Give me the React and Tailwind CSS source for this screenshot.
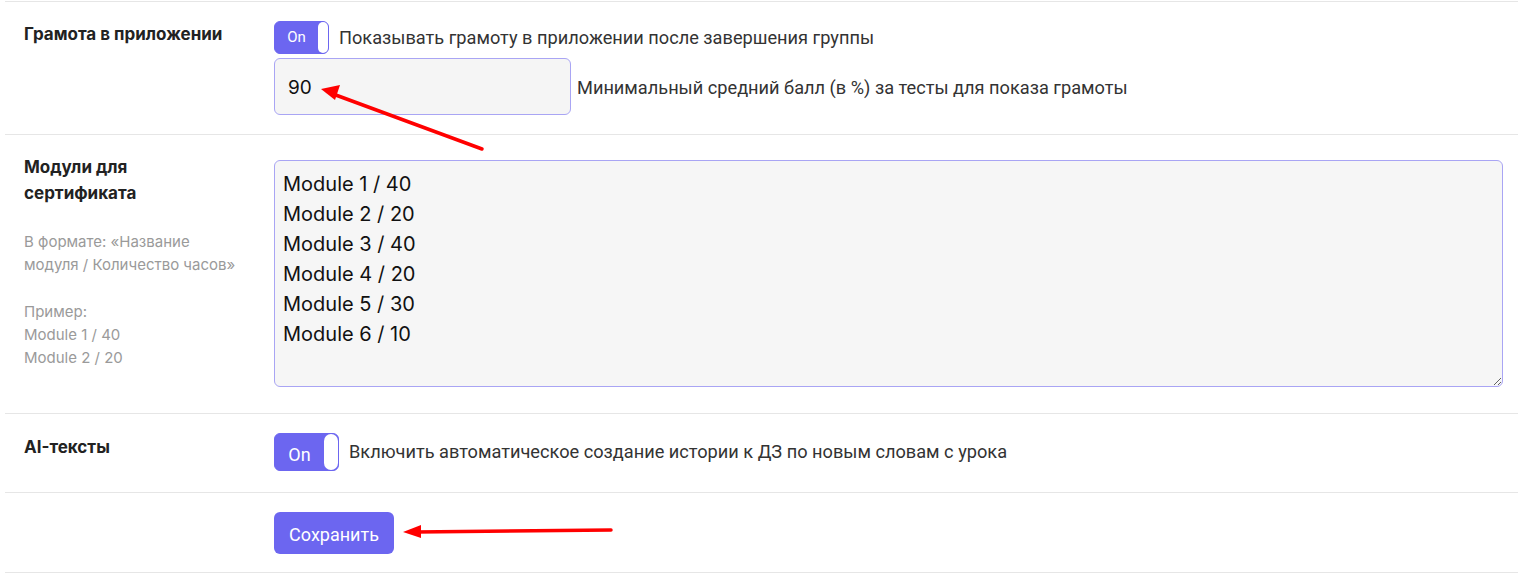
import React from "react";

function Toggle({ big }) {
  return (
    <div
      className={
        big
          ? "flex h-[38px] w-[65px] shrink-0 rounded-[6px] bg-[#6c66f0] border border-[#6c66f0]"
          : "flex h-[33px] w-[55px] shrink-0 rounded-[6px] bg-[#6c66f0] border border-[#6c66f0]"
      }
    >
      <div
        className={
          big
            ? "flex flex-1 items-center justify-center pt-[4px] text-[18px] text-white font-['Roboto',sans-serif]"
            : "flex flex-1 items-center justify-center text-[15px] text-white font-['Roboto',sans-serif]"
        }
      >
        On
      </div>
      <div className={big ? "w-[14px] rounded-[7px] bg-white" : "w-[10px] rounded-[6px] bg-white"} />
    </div>
  );
}

function Arrows() {
  return (
    <svg className="pointer-events-none absolute left-0 top-0" width="1518" height="584">
      <g stroke="#ff0000" strokeWidth="3.5" strokeLinecap="round" fill="#ff0000">
        <line x1="482" y1="149" x2="333" y2="94" />
        <polygon points="321,89 340,85 335,100" stroke="none" />
        <line x1="611" y1="530" x2="416" y2="532" />
        <polygon points="403,532 421,525 421,538" stroke="none" />
      </g>
    </svg>
  );
}

export default function App() {
  const modules = [
    "Module 1 / 40",
    "Module 2 / 20",
    "Module 3 / 40",
    "Module 4 / 20",
    "Module 5 / 30",
    "Module 6 / 10",
  ];

  return (
    <div className="relative h-[584px] w-[1518px] bg-white pt-px pl-[5px] font-['Inter',sans-serif] text-[#222]">
      {/* row 1 */}
      <div className="flex border-t border-[#e6e6e6] pt-[19px] pb-[19px]">
        <div className="w-[269px] shrink-0 pl-[19px] pt-[1px] text-[17px] font-bold leading-[24px] text-[#222]">
          Грамота в приложении
        </div>
        <div className="flex flex-col gap-[4px]">
          <div className="flex items-center gap-[10px]">
            <Toggle />
            <span className="font-['Roboto',sans-serif] text-[18.2px] text-[#333]">
              Показывать грамоту в приложении после завершения группы
            </span>
          </div>
          <div className="flex items-center gap-[6px]">
            <div className="flex h-[57px] w-[297px] items-center rounded-[6px] border border-[#a9a5f4] bg-[#f5f5f5] px-[13px] pt-[3px] text-[19px] text-[#111]">
              90
            </div>
            <span className="pt-[3px] font-['Roboto',sans-serif] text-[18.2px] text-[#333]">
              Минимальный средний балл (в %) за тесты для показа грамоты
            </span>
          </div>
        </div>
      </div>

      {/* row 2 */}
      <div className="flex border-t border-[#e6e6e6] pt-[25px] pb-[26px] pr-[15px]">
        <div className="w-[269px] shrink-0 pl-[19px] -mt-[6px]">
          <div className="text-[17px] font-bold leading-[26px] text-[#222]">
            Модули для
            <br />
            сертификата
          </div>
          <div className="mt-[24px] text-[15px] leading-[23px] text-[#9a9a9a]">
            В формате: «Название
            <br />
            модуля / Количество часов»
          </div>
          <div className="mt-[24px] text-[15px] leading-[23px] text-[#9a9a9a]">
            Пример:
            <br />
            Module 1 / 40
            <br />
            Module 2 / 20
          </div>
        </div>
        <textarea
          readOnly
          value={modules.join("\n")}
          className="h-[227px] flex-1 resize rounded-[6px] border border-[#a9a5f4] bg-[#f6f6f6] px-[8px] py-[8px] text-[20px] leading-[30px] text-[#111] outline-none font-['Inter',sans-serif]"
        />
      </div>

      {/* row 3 */}
      <div className="flex border-t border-[#e6e6e6] pt-[19px] pb-[21px]">
        <div className="w-[269px] shrink-0 pl-[19px] pt-[2px] text-[17px] font-bold leading-[24px] text-[#222]">
          AI-тексты
        </div>
        <div className="flex items-center gap-[10px]">
          <Toggle big />
          <span className="font-['Roboto',sans-serif] text-[18.2px] text-[#333]">
            Включить автоматическое создание истории к ДЗ по новым словам с урока
          </span>
        </div>
      </div>

      {/* row 4 */}
      <div className="flex border-t border-b border-[#e6e6e6] pt-[19px] pb-[18px]">
        <div className="w-[269px] shrink-0" />
        <button className="h-[42px] w-[120px] rounded-[6px] bg-[#6c66f0] pt-[2px] text-[18px] text-white font-['Roboto',sans-serif]">
          Сохранить
        </button>
      </div>

      <Arrows />
    </div>
  );
}
